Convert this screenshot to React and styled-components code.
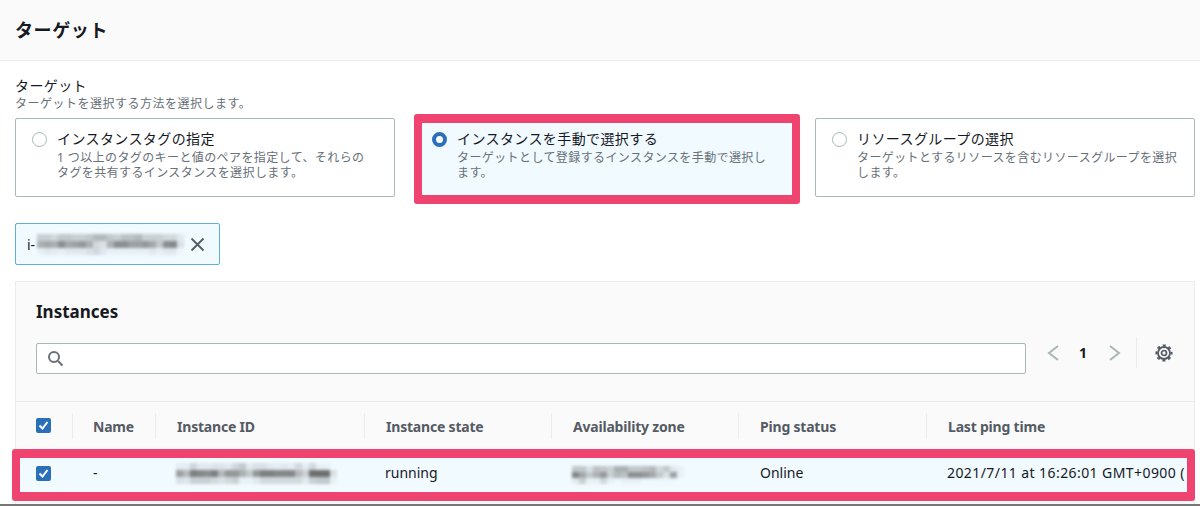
import React from 'react';
import styled, { createGlobalStyle } from 'styled-components';

const Global = createGlobalStyle`
  html, body { margin: 0; padding: 0; background: #fff; }
  body { width: 1200px; height: 506px; overflow: hidden; font-family: "Noto Sans", "Noto Sans CJK JP", sans-serif; color: #16191f; }
`;
const Page = styled.div`
  position: relative; width: 1200px; height: 506px; overflow: hidden; background: #fff;
  border-bottom: 2px solid #777; box-sizing: border-box;
`;
const Header = styled.header`
  background: #fafafa; border-bottom: 1px solid #eaeded;
  padding: 0 0 2px 15px; box-sizing: content-box; height: 58px; display: flex; align-items: center;
`;
const Title = styled.h2`margin: 0; font-size: 18px; font-weight: 700; color: #16191f; letter-spacing: .6px;`;
const Body = styled.div`padding: 15px 5px 0 15px;`;
const Label = styled.div`font-size: 14px; line-height: 20px; color: #16191f; height: 20px; letter-spacing: .4px;`;
const Hint = styled.div`font-size: 12px; line-height: 16px; color: #687078; height: 22px; letter-spacing: .5px;`;
const Tiles = styled.div`display: grid; grid-template-columns: repeat(3, 380px); gap: 20px;`;
const Tile = styled.div`
  height: 79px; box-sizing: border-box; border: 1px solid ${p => (p.$on ? '#0073bb' : '#aab7b8')}; border-radius: 2px;
  background: ${p => (p.$on ? '#f1faff' : '#fff')}; padding: 10px 10px 0 16px; display: flex; gap: 10px;
`;
const Radio = styled.span`
  flex: none; margin-top: 3px; border-radius: 50%; box-sizing: border-box; width: 15px; height: 15px; background: #fff;
  border: ${p => (p.$on ? '4px solid #2a6fb8' : '1px solid #aab7b8')};
`;
const TileText = styled.div`flex: 1; min-width: 0;`;
const TileTitle = styled.div`font-size: 14px; line-height: 20px; color: #16191f; letter-spacing: .4px;`;
const TileDesc = styled.div`font-size: 12px; line-height: 15px; margin-top: 1px; color: #687078; letter-spacing: .4px; white-space: nowrap;`;
const Token = styled.div`
  margin-top: 26px; width: 205px; height: 42px; box-sizing: border-box; display: flex; align-items: center;
  border: 1px solid #5fb0d8; border-radius: 2px; background: #f1faff; padding-left: 11px; position: relative;
  font-size: 14px; color: #16191f;
`;
const TokenClose = styled.svg`position: absolute; left: 174px; top: 13px; width: 15px; height: 15px;`;
const Panel = styled.section`
  margin-top: 16px; width: 1180px; height: 240px; box-sizing: border-box; background: #fafafa;
  border: 1px solid #eaeded; border-bottom: 0;
`;
const PanelHead = styled.div`height: 120px; box-sizing: border-box; padding: 18px 20px 0 20px; border-bottom: 1px solid #eaeded;`;
const PanelTitle = styled.h3`margin: 0; font-size: 17px; line-height: 24px; font-weight: 700; color: #16191f;`;
const Tools = styled.div`display: flex; align-items: flex-start; margin-top: 19px;`;
const Search = styled.div`
  width: 990px; height: 31px; box-sizing: border-box; background: #fff; border: 1px solid #aab7b8; border-radius: 2px;
  display: flex; align-items: center; padding-left: 10px;
`;
const Pager = styled.div`display: flex; align-items: center; height: 31px; margin: -6px 0 0 20px;`;
const PageNo = styled.span`font-size: 14px; font-weight: 700; width: 46px; margin-right: 2px; text-align: center;`;
const Divider = styled.span`width: 1px; height: 31px; background: #eaeded; margin: 0 18px 0 14px;`;
const Row = styled.div`
  display: grid; grid-template-columns: 57px 83px 209px 187px 187px 188px 1fr; align-items: center;
  background: ${p => (p.$on ? '#f1faff' : 'transparent')};
  height: ${p => p.$h}px; font-size: 14px;
`;
const Cell = styled.div`
  height: 100%; display: flex; align-items: center; padding-left: ${p => p.$pad ?? 20}px; white-space: nowrap; overflow: hidden;
  color: #16191f; min-width: 0;
`;
const Time = styled.span`letter-spacing: .42px;`;
const HeadCell = styled.div`
  position: relative; height: 100%; display: flex; align-items: center; padding-left: ${p => p.$pad ?? 21}px; white-space: nowrap;
  font-weight: 700; color: #545b64; letter-spacing: -.2px;
  &::after { content: ''; display: ${p => (p.$last ? 'none' : 'block')}; position: absolute; right: 0; top: 11px; bottom: 12px; width: 1px; background: #eaeded; }
`;
const Box = styled.span`
  width: 15px; height: 15px; background: #2a6fb8; border-radius: 2px; display: inline-flex; align-items: center; justify-content: center;
  margin-top: ${p => p.$mt}px;
`;
const Highlight = styled.div`
  position: absolute; box-sizing: border-box; border-style: solid; border-color: #ef4370; border-width: 9px 8px; border-radius: 3px; pointer-events: none;
`;
const Mosaic = styled.svg`display: block; filter: blur(1.4px); flex: none; margin: ${p => p.$mt ?? 0}px 0 0 ${p => p.$ml ?? 0}px;`;

const Blur = ({ cells, w = 7, h = 7, mt, ml }) => (
  <Mosaic width={cells[0].length * w} height={cells.length * h} $mt={mt} $ml={ml}>
    {cells.map((row, y) => row.map((v, x) => <rect key={x + '-' + y} x={x * w} y={y * h} width={w} height={h} fill="#555" opacity={v} />))}
  </Mosaic>
);
const tokenCells = [
  [.25,.25,.2,.3,.3,.25,.25,.3,.4,.4,.3,.25,.35,.35,.4,.25,.25,.25,.2,.2,.1],
  [.45,.5,.45,.65,.5,.55,.6,.45,.2,.15,.45,.65,.65,.55,.55,.6,.5,.3,.65,.7,.15],
  [.05,.1,.08,.05,.1,.1,.1,.15,.2,.1,.05,.05,.05,.05,.05,.05,.1,.05,.1,.1,.02],
];
const idCells = [
  [.08,.08,.22,.1,.1,.12,.12,.1,.2,.3,.1,.15,.15,.1,.08,.1,.08,.2,.08,.2,.05,.05,0],
  [.55,.4,.75,.7,.65,.75,.4,.6,.6,.45,.3,.6,.75,.75,.7,.7,.7,.4,.25,.85,.85,.85,.15],
  [.15,.12,.25,.25,.25,.2,.15,.2,.25,.05,.05,.1,.2,.2,.2,.2,.2,.2,.1,.25,.3,.3,.05],
];
const azCells = [
  [.3,.3,.15,.35,.3,.25,.45,.45,.3,.3,.35,.4,.2,.3,.1,.05],
  [.7,.5,.3,.45,.6,.25,.4,.35,.65,.65,.6,.5,.3,.15,.55,.05],
  [.1,.25,.05,.05,.2,.05,.02,.05,.05,.05,.02,.02,.02,.02,.02,0],
];
const Check = ({ mt }) => (
  <Box $mt={mt}><svg width="11" height="11" viewBox="0 0 11 11"><path d="M1.5 5.5l3 3 5-6.5" fill="none" stroke="#fff" strokeWidth="2" /></svg></Box>
);

export default function App() {
  return (
    <Page>
      <Global />
      <Header><Title>ターゲット</Title></Header>
      <Body>
        <Label>ターゲット</Label>
        <Hint>ターゲットを選択する方法を選択します。</Hint>
        <Tiles>
          <Tile>
            <Radio />
            <TileText>
              <TileTitle>インスタンスタグの指定</TileTitle>
              <TileDesc>1 つ以上のタグのキーと値のペアを指定して、それらの<br />タグを共有するインスタンスを選択します。</TileDesc>
            </TileText>
          </Tile>
          <Tile $on>
            <Radio $on />
            <TileText>
              <TileTitle>インスタンスを手動で選択する</TileTitle>
              <TileDesc>ターゲットとして登録するインスタンスを手動で選択し<br />ます。</TileDesc>
            </TileText>
          </Tile>
          <Tile>
            <Radio />
            <TileText>
              <TileTitle>リソースグループの選択</TileTitle>
              <TileDesc>ターゲットとするリソースを含むリソースグループを選択<br />します。</TileDesc>
            </TileText>
          </Tile>
        </Tiles>
        <Token>
          i-<Blur cells={tokenCells} ml={2} />
          <TokenClose viewBox="0 0 15 15"><path d="M1.5 1.5l12 12M13.5 1.5l-12 12" stroke="#545b64" strokeWidth="1.8" fill="none" /></TokenClose>
        </Token>
        <Panel>
          <PanelHead>
            <PanelTitle>Instances</PanelTitle>
            <Tools>
              <Search>
                <svg width="17" height="17" viewBox="0 0 17 17"><circle cx="7" cy="7" r="5" fill="none" stroke="#687078" strokeWidth="2" /><path d="M11 11l4.5 4.5" stroke="#687078" strokeWidth="2" /></svg>
              </Search>
              <Pager>
                <svg width="14" height="18" viewBox="0 0 14 18"><path d="M12 2L3 9l9 7" fill="none" stroke="#aab7b8" strokeWidth="2" /></svg>
                <PageNo>1</PageNo>
                <svg width="14" height="18" viewBox="0 0 14 18"><path d="M2 2l9 7-9 7" fill="none" stroke="#aab7b8" strokeWidth="2" /></svg>
                <Divider />
                <svg width="18" height="18" viewBox="0 0 18 18" fill="none" stroke="#545b64">
                  <circle cx="9" cy="9" r="6" strokeWidth="1.8" />
                  <circle cx="9" cy="9" r="2.5" strokeWidth="1.7" />
                  <circle cx="9" cy="9" r="7.6" strokeWidth="2" strokeDasharray="3 2.97" strokeDashoffset="1.5" />
                </svg>
              </Pager>
            </Tools>
          </PanelHead>
          <Row $h={49}>
            <HeadCell $pad={20}><Check mt={-2} /></HeadCell>
            <HeadCell $pad={20}>Name</HeadCell>
            <HeadCell>Instance ID</HeadCell>
            <HeadCell>Instance state</HeadCell>
            <HeadCell>Availability zone</HeadCell>
            <HeadCell>Ping status</HeadCell>
            <HeadCell $last>Last ping time</HeadCell>
          </Row>
          <Row $h={42} $on>
            <Cell><Check mt={2} /></Cell>
            <Cell>-</Cell>
            <Cell><Blur cells={idCells} mt={2} /></Cell>
            <Cell>running</Cell>
            <Cell><Blur cells={azCells} h={6} mt={6} /></Cell>
            <Cell $pad={21}>Online</Cell>
            <Cell><Time>2021/7/11 at 16:26:01 GMT+0900 (</Time></Cell>
          </Row>
        </Panel>
      </Body>
      <Highlight style={{ left: 414, top: 114, width: 386, height: 90 }} />
      <Highlight style={{ left: 12, top: 449, width: 1183, height: 52 }} />
    </Page>
  );
}
